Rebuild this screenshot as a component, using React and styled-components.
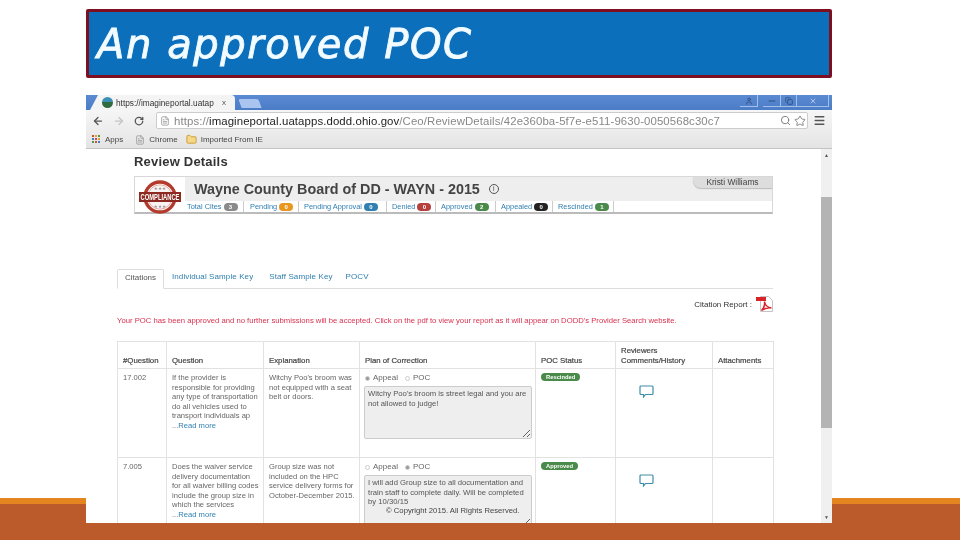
import React from 'react'
import styled, { createGlobalStyle } from 'styled-components'
import { ArrowLeft, ArrowRight, RotateCw, FileText, Folder, Search, Star, Menu, User, Minus, Copy, X } from 'lucide-react'

const GlobalStyle = createGlobalStyle`
    html, body {
        margin: 0;
        padding: 0;
        background: #fff;
    }
    * {
        box-sizing: border-box;
    }
`

const summary = [
    { label: 'Total Cites', count: 3, color: '#8a8a8a', width: 59, pad: 2 },
    { label: 'Pending', count: 0, color: '#e8961e', width: 55, pad: 6 },
    { label: 'Pending Approval', count: 0, color: '#2f7fb0', width: 88, pad: 5 },
    { label: 'Denied', count: 0, color: '#b5403c', width: 49, pad: 5 },
    { label: 'Approved', count: 2, color: '#4a8a4a', width: 60, pad: 5 },
    { label: 'Appealed', count: 0, color: '#222', width: 57, pad: 5 },
    { label: 'Rescinded', count: 1, color: '#4a8a4a', width: 61, pad: 5 },
]

const citations = [
    {
        id: '17.002',
        question: 'If the provider is responsible for providing any type of transportation do all vehicles used to transport individuals ap',
        explanation: "Witchy Poo's broom was not equipped with a seat belt or doors.",
        picked: 'Appeal',
        plan: "Witchy Poo's broom is street legal and you are\nnot allowed to judge!",
        status: 'Rescinded',
        height: 89,
    },
    {
        id: '7.005',
        question: 'Does the waiver service delivery documentation for all waiver billing codes include the group size in which the services',
        explanation: 'Group size was not included on the HPC service delivery forms for October-December 2015.',
        picked: 'POC',
        plan: 'I will add Group size to all documentation and\ntrain staff to complete daily. Will be completed\nby 10/30/15',
        status: 'Approved',
        height: 89,
    },
]

const appsColors = ['#c8503c', '#e0a030', '#4a9a50', '#3f7fc0', '#c8503c', '#e0a030', '#4a9a50', '#c8503c', '#3f7fc0']

const Logo = () => (
    <svg width="48" height="37" viewBox="0 0 48 37">
        <circle cx="24" cy="20" r="15" fill="#fff" stroke="#b33a2c" strokeWidth="3.400" />
        <circle cx="24" cy="20" r="12.200" fill="#fbf3f1" stroke="#d88a80" strokeWidth="0.700" />
        <text x="24" y="13" textAnchor="middle" fontFamily="DejaVu Sans, sans-serif" fontSize="4.600" fill="#9a9a9a">★★★</text>
        <text x="24" y="31" textAnchor="middle" fontFamily="DejaVu Sans, sans-serif" fontSize="4.600" fill="#9a9a9a">★★★</text>
        <rect x="3" y="15" width="42" height="10" fill="#8c2a22" />
        <text transform="translate(24 23.300) scale(1 1.500)" textAnchor="middle" fontFamily="Liberation Sans, sans-serif" fontSize="5.800" fontWeight="700" fill="#fff">COMPLIANCE</text>
    </svg>
)

const PdfIcon = () => (
    <svg width="18" height="16" viewBox="0 0 18 16">
        <path d="M5.500 .5h8l4 4v11h-12z" fill="#fff" stroke="#c4c4c4" />
        <rect x="1" y="1" width="10" height="4" fill="#d8232a" />
        <path d="M6.500 14.500c2-2 3.500-5.500 3-9 .5 3.500 2.500 6 7 6.500-3.500-.5-7 .5-10 2.500z" fill="none" stroke="#d8232a" strokeWidth="1.500" />
    </svg>
)

const CommentIcon = () => (
    <svg width="15" height="13" viewBox="0 0 15 13">
        <path d="M2 1h11a1 1 0 0 1 1 1v6.500a1 1 0 0 1-1 1H6.500L4.500 12V9.500H2a1 1 0 0 1-1-1V2a1 1 0 0 1 1-1z" fill="#fff" stroke="#3f8fa8" strokeWidth="1.200" />
    </svg>
)

const App = () => {
    return (
        <Slide>
            <GlobalStyle />
            <Banner>
                <BannerText>An approved POC</BannerText>
            </Banner>
            <Browser>
                <TabStrip>
                    <Tab>
                        <Favicon />
                        <TabTitle>https://imagineportal.uatap</TabTitle>
                        <TabClose>x</TabClose>
                    </Tab>
                    <NewTab />
                    <WindowButtons>
                        <WindowButton $w={18} $mr={5}><User size={8} strokeWidth={2} /></WindowButton>
                        <WindowButton $w={18}><Minus size={10} strokeWidth={2} /></WindowButton>
                        <WindowButton $w={16}><Copy size={8} strokeWidth={2} /></WindowButton>
                        <WindowButton $w={32} $light><X size={8} strokeWidth={2} /></WindowButton>
                    </WindowButtons>
                </TabStrip>
                <Toolbar>
                    <NavIcon $color="#555"><ArrowLeft size={12} strokeWidth={2.500} /></NavIcon>
                    <NavIcon $color="#c4c4c4"><ArrowRight size={12} strokeWidth={2.500} /></NavIcon>
                    <NavIcon $color="#555"><RotateCw size={10} strokeWidth={3} /></NavIcon>
                    <AddressBar>
                        <FileText size={10} color="#999" />
                        <Url>
                            https://<b>imagineportal.uatapps.dodd.ohio.gov</b>/Ceo/ReviewDetails/42e360ba-5f7e-e511-9630-0050568c30c7
                        </Url>
                        <Search size={11} color="#777" />
                        <Star size={12} color="#888" />
                    </AddressBar>
                    <Menu size={13} color="#555" strokeWidth={2.500} />
                </Toolbar>
                <Bookmarks>
                    <AppsGrid>
                        {appsColors.map((c, i) => <AppsDot key={i} $color={c} />)}
                    </AppsGrid>
                    <Bookmark $mr={8}>Apps</Bookmark>
                    <FileText size={10} color="#999" />
                    <Bookmark $mr={4}>Chrome</Bookmark>
                    <Folder size={11} color="#c99a2e" fill="#f5d88a" />
                    <Bookmark>Imported From IE</Bookmark>
                </Bookmarks>
                <Viewport>
                    <Page>
                        <Heading>Review Details</Heading>
                        <Card>
                            <LogoBox><Logo /></LogoBox>
                            <CardMain>
                                <CardTitleRow>
                                    <CardTitle>Wayne County Board of DD - WAYN - 2015</CardTitle>
                                    <InfoMark>i</InfoMark>
                                    <UserTag>Kristi Williams</UserTag>
                                </CardTitleRow>
                                <SummaryRow>
                                    {summary.map((s) => (
                                        <SummaryItem key={s.label} $w={s.width} $pad={s.pad}>
                                            {s.label}<Count $color={s.color}>{s.count}</Count>
                                        </SummaryItem>
                                    ))}
                                </SummaryRow>
                            </CardMain>
                        </Card>
                        <Tabs>
                            <ActiveTab>Citations</ActiveTab>
                            <TabLink $mr={8}>Individual Sample Key</TabLink>
                            <TabLink $mr={5}>Staff Sample Key</TabLink>
                            <TabLink $mr={0}>POCV</TabLink>
                        </Tabs>
                        <ReportRow>Citation Report :<PdfIcon /></ReportRow>
                        <Notice>Your POC has been approved and no further submissions will be accepted. Click on the pdf to view your report as it will appear on DODD's Provider Search website.</Notice>
                        <Table>
                            <colgroup>
                                <col width="49" />
                                <col width="97" />
                                <col width="96" />
                                <col width="176" />
                                <col width="80" />
                                <col width="97" />
                                <col width="61" />
                            </colgroup>
                            <thead>
                                <tr>
                                    <Th>#Question</Th>
                                    <Th>Question</Th>
                                    <Th>Explanation</Th>
                                    <Th>Plan of Correction</Th>
                                    <Th>POC Status</Th>
                                    <Th>Reviewers Comments/History</Th>
                                    <Th>Attachments</Th>
                                </tr>
                            </thead>
                            <tbody>
                                {citations.map((c) => (
                                    <Row key={c.id} $h={c.height}>
                                        <Td>{c.id}</Td>
                                        <Td>
                                            {c.question}
                                            <ReadMore>...<span>Read more</span></ReadMore>
                                        </Td>
                                        <Td>{c.explanation}</Td>
                                        <Td>
                                            <Radios>
                                                <Radio $on={c.picked === 'Appeal'} />Appeal
                                                <Radio $on={c.picked === 'POC'} $gap />POC
                                            </Radios>
                                            <Plan readOnly value={c.plan} />
                                        </Td>
                                        <Td><Status>{c.status}</Status></Td>
                                        <Td><CommentSlot><CommentIcon /></CommentSlot></Td>
                                        <Td />
                                    </Row>
                                ))}
                            </tbody>
                        </Table>
                        <Copyright>© Copyright 2015. All Rights Reserved.</Copyright>
                    </Page>
                    <Scrollbar>
                        <ScrollArrow>▲</ScrollArrow>
                        <ScrollThumb />
                        <ScrollArrow>▼</ScrollArrow>
                    </Scrollbar>
                </Viewport>
            </Browser>
            <Footer />
        </Slide>
    )
}

export default App

const Slide = styled.div`
    position: relative;
    width: 960px;
    height: 540px;
    overflow: hidden;
    background: #fff;
    padding: 9px 128px 0 86px;
    display: flex;
    flex-direction: column;
    gap: 17px;
`
const Footer = styled.div`
    position: absolute;
    left: 0;
    right: 0;
    bottom: 0;
    height: 42px;
    background: #bb5a2b;
    border-top: 6px solid #e5851f;
`
const Banner = styled.div`
    height: 69px;
    background: #0b6fbc;
    border: 3px solid #7d0f20;
    border-radius: 2px;
    padding: 1px 0 0 8px;
    display: flex;
    align-items: center;
`
const BannerText = styled.div`
    font-family: "DejaVu Sans", sans-serif;
    font-style: oblique;
    font-size: 40px;
    color: #f2fbff;
    -webkit-text-stroke: 0.9px #f2fbff;
    letter-spacing: 1.6px;
    filter: blur(0.4px);
`
const Browser = styled.div`
    position: relative;
    z-index: 1;
    height: 428px;
    background: #fff;
    display: flex;
    flex-direction: column;
    filter: blur(0.45px);
    font-family: "Liberation Sans", Arial, sans-serif;
`
const TabStrip = styled.div`
    height: 15px;
    background: linear-gradient(#5a8ad2, #4b7cc6);
    display: flex;
    align-items: flex-end;
    padding-left: 4px;
`
const Tab = styled.div`
    width: 145px;
    height: 15px;
    background: #f4f4f4;
    border-radius: 4px 4px 0 0;
    display: flex;
    align-items: center;
    padding-left: 12px;
    clip-path: polygon(8px 0, 100% 0, 100% 100%, 0 100%);
`
const Favicon = styled.div`
    width: 11px;
    height: 11px;
    border-radius: 50%;
    background: linear-gradient(#3e8fb5 50%, #2f6b3c 50%);
    flex-shrink: 0;
`
const TabTitle = styled.div`
    font-size: 8.300px;
    color: #333;
    margin-left: 3px;
    white-space: nowrap;
    overflow: hidden;
    width: 98px;
`
const TabClose = styled.div`
    font-size: 8px;
    color: #555;
    margin-left: 8px;
`
const NewTab = styled.div`
    width: 20px;
    height: 9px;
    margin: 0 0 2px 5px;
    background: #a9c4ee;
    border-radius: 2px 2px 0 0;
    transform: skewX(20deg);
`
const WindowButtons = styled.div`
    margin-left: auto;
    height: 12px;
    align-self: flex-start;
    display: flex;
    margin-right: 3px;
`
const WindowButton = styled.div`
    width: ${(p) => p.$w}px;
    height: 12px;
    margin-right: ${(p) => p.$mr || 0}px;
    color: ${(p) => (p.$light ? '#dde8f6' : '#27446f')};
    display: flex;
    align-items: center;
    justify-content: center;
    border-right: 1px solid #a5c0e8;
    border-bottom: 1px solid #a5c0e8;
`
const Toolbar = styled.div`
    height: 21px;
    background: linear-gradient(#f6f6f6, #ececec);
    display: flex;
    align-items: center;
    padding-left: 6px;
`
const NavIcon = styled.div`
    width: 21px;
    display: flex;
    color: ${(p) => p.$color};
`
const AddressBar = styled.div`
    width: 652px;
    height: 17px;
    margin: 0 5px 0 1px;
    background: #fff;
    border: 1px solid #ccc;
    border-radius: 2px;
    display: flex;
    align-items: center;
    padding: 0 1px 0 3px;
    gap: 3px;
`
const Url = styled.div`
    flex: 1;
    font-size: 11.400px;
    letter-spacing: 0.1px;
    color: #888;
    white-space: nowrap;
    overflow: hidden;
    margin-left: 1px;
    b {
        font-weight: 400;
        color: #222;
    }
`
const Bookmarks = styled.div`
    height: 18px;
    background: linear-gradient(#ececec, #e4e4e4);
    border-bottom: 1px solid #c4c4c4;
    display: flex;
    align-items: center;
    padding-left: 6px;
    gap: 4px;
`
const AppsGrid = styled.div`
    width: 9px;
    height: 9px;
    display: grid;
    grid-template-columns: repeat(3, 2px);
    grid-auto-rows: 2px;
    gap: 1px;
`
const AppsDot = styled.span`
    background: ${(p) => p.$color};
`
const Bookmark = styled.div`
    font-size: 8px;
    color: #444;
    margin-right: ${(p) => p.$mr || 0}px;
`
const Viewport = styled.div`
    position: relative;
    flex: 1;
    display: flex;
    overflow: hidden;
`
const Page = styled.div`
    position: relative;
    flex: 1;
    padding: 6px 48px 0 31px;
    overflow: hidden;
`
const Scrollbar = styled.div`
    width: 11px;
    background: #f0f0f0;
    display: flex;
    flex-direction: column;
    align-items: center;
`
const ScrollArrow = styled.div`
    height: 12px;
    font-size: 5px;
    line-height: 12px;
    color: #555;
`
const ScrollThumb = styled.div`
    width: 100%;
    height: 231px;
    margin-top: 36px;
    margin-bottom: auto;
    background: #b4b4b4;
`
const Heading = styled.div`
    margin-left: 17px;
    font-size: 13px;
    font-weight: 700;
    color: #333;
    line-height: 13px;
    letter-spacing: 0.2px;
`
const Card = styled.div`
    margin: 8px 0 0 17px;
    height: 38px;
    display: flex;
    border: 1px solid #d8d8d8;
    border-bottom: 2px solid #bbb;
`
const LogoBox = styled.div`
    width: 50px;
    background: #fff;
    display: flex;
    align-items: flex-start;
    justify-content: center;
`
const CardMain = styled.div`
    flex: 1;
    display: flex;
    flex-direction: column;
`
const CardTitleRow = styled.div`
    position: relative;
    height: 24px;
    background: #eee;
    display: flex;
    align-items: center;
    padding-left: 9px;
`
const CardTitle = styled.div`
    font-size: 14.350px;
    font-weight: 700;
    color: #444;
`
const InfoMark = styled.div`
    width: 10px;
    height: 10px;
    margin-left: 9px;
    border: 1px solid #555;
    border-radius: 50%;
    font-size: 7px;
    line-height: 8px;
    text-align: center;
    color: #444;
`
const UserTag = styled.div`
    position: absolute;
    top: 0;
    right: 0;
    width: 79px;
    height: 11px;
    background: #ddd;
    border-bottom-left-radius: 8px;
    box-shadow: 0 1px 1px #bbb;
    font-size: 8.400px;
    line-height: 10px;
    text-align: center;
    color: #444;
`
const SummaryRow = styled.div`
    height: 11px;
    background: #fff;
    display: flex;
`
const SummaryItem = styled.div`
    width: ${(p) => p.$w}px;
    border-right: 1px solid #ccc;
    padding-left: ${(p) => p.$pad}px;
    font-size: 7.400px;
    line-height: 11px;
    color: #2f7fb0;
    white-space: nowrap;
`
const Count = styled.span`
    display: inline-block;
    min-width: 14px;
    height: 8px;
    margin-left: 2px;
    border-radius: 4px;
    background: ${(p) => p.$color};
    color: #fff;
    font-size: 6px;
    font-weight: 700;
    line-height: 8px;
    text-align: center;
`
const Tabs = styled.div`
    margin-top: 55px;
    height: 20px;
    display: flex;
    border-bottom: 1px solid #ddd;
    font-size: 8px;
`
const ActiveTab = styled.div`
    width: 47px;
    height: 20px;
    border: 1px solid #ddd;
    border-bottom-color: #fff;
    border-radius: 2px 2px 0 0;
    text-align: center;
    line-height: 16px;
    color: #555;
    background: #fff;
`
const TabLink = styled.div`
    margin-left: 8px;
    margin-right: ${(p) => p.$mr}px;
    line-height: 16px;
    color: #2f7fb0;
    letter-spacing: 0.1px;
`
const ReportRow = styled.div`
    margin-top: 7px;
    height: 16px;
    display: flex;
    justify-content: flex-end;
    align-items: center;
    gap: 3px;
    font-size: 8px;
    color: #333;
`
const Notice = styled.div`
    margin-top: 1px;
    font-size: 7.700px;
    line-height: 16px;
    color: #d9304f;
    white-space: nowrap;
`
const Table = styled.table`
    margin-top: 12px;
    width: 656px;
    table-layout: fixed;
    border-collapse: collapse;
    font-size: 7.600px;
    color: #666;
`
const Th = styled.th`
    height: 27px;
    padding: 0 5px 3px;
    border: 1px solid #e2e2e2;
    text-align: left;
    vertical-align: bottom;
    font-size: 7.800px;
    font-weight: 400;
    -webkit-text-stroke: 0.2px #444;
    line-height: 9.500px;
    color: #444;
`
const Row = styled.tr`
    height: ${(p) => p.$h}px;
`
const Td = styled.td`
    padding: 4px 2px 0 5px;
    border: 1px solid #e2e2e2;
    vertical-align: top;
    line-height: 9.500px;
`
const ReadMore = styled.div`
    span {
        color: #2f7fb0;
    }
`
const Radios = styled.div`
    display: flex;
    align-items: center;
    height: 10px;
    font-size: 8px;
    margin-left: -1px;
`
const Radio = styled.span`
    width: 5px;
    height: 5px;
    border-radius: 50%;
    border: 1px solid #ccc;
    background: ${(p) => (p.$on ? '#999' : '#fff')};
    margin: 0 3px 0 ${(p) => (p.$gap ? 7 : 1)}px;
`
const Plan = styled.textarea`
    display: block;
    width: 168px;
    height: 53px;
    margin: 3px 0 0 -1px;
    padding: 2px 1px 0 3px;
    border: 1px solid #ccc;
    border-radius: 2px;
    background: #eee;
    font-family: "Liberation Sans", Arial, sans-serif;
    font-size: 7.700px;
    line-height: 9.500px;
    color: #555;
    outline: none;
    overflow: hidden;
    white-space: pre;
`
const Status = styled.span`
    display: inline-block;
    vertical-align: top;
    padding: 0 5px;
    height: 8px;
    line-height: 8px;
    border-radius: 4px;
    background: #4a8a4a;
    color: #fff;
    font-size: 5.800px;
    font-weight: 700;
`
const CommentSlot = styled.div`
    padding: 12px 0 0 18px;
`
const Copyright = styled.div`
    position: absolute;
    left: 300px;
    top: 357px;
    font-size: 7.700px;
    color: #444;
`
